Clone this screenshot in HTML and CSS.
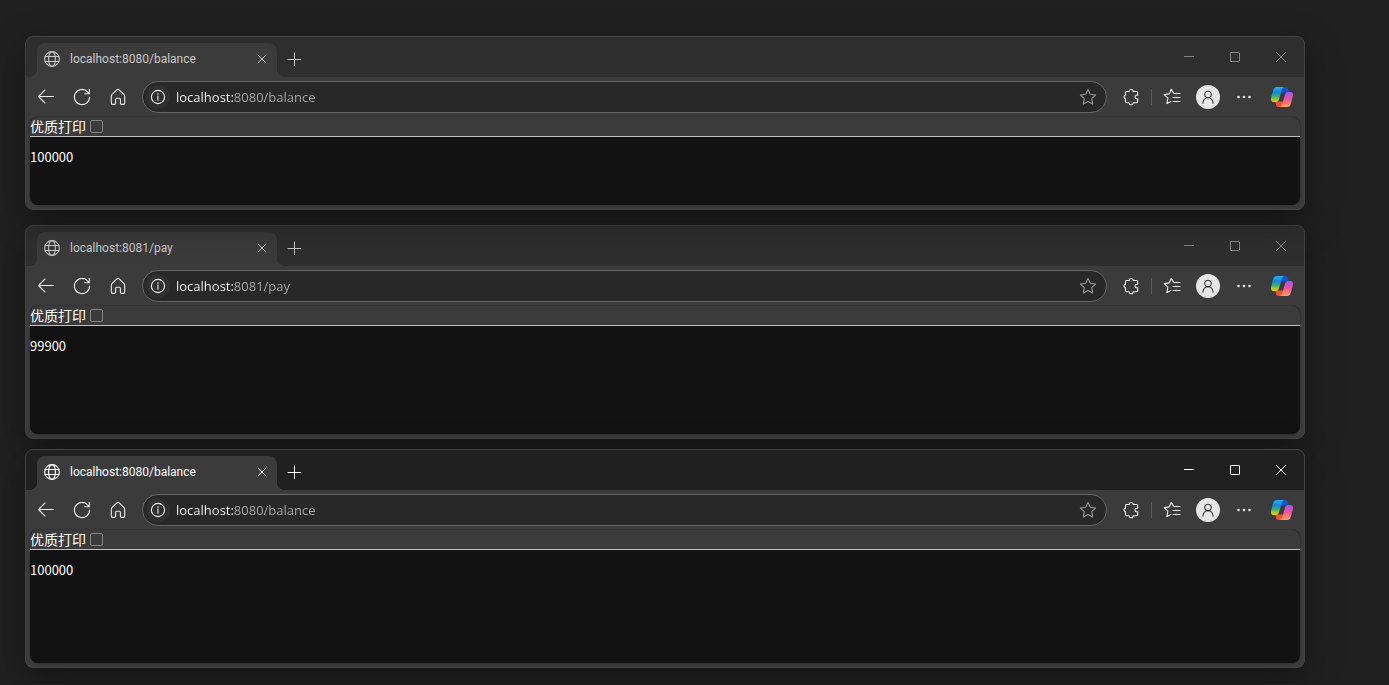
FILE: index.html
```
<!DOCTYPE html>
<html lang="zh-CN">
  <head>
    <meta charset="UTF-8" />
    <meta name="viewport" content="width=device-width, initial-scale=1.0" />
    <title>localhost</title>
    <link rel="stylesheet" href="styles.css">
  </head>
  <body>
    <!-- Shared icons -->
    <svg class="sprite" aria-hidden="true">
      <defs>
        <linearGradient id="cool" x1="0" y1="0" x2="0" y2="1">
          <stop offset="0" stop-color="#22b4f5" />
          <stop offset="0.35" stop-color="#1487dc" />
          <stop offset="0.65" stop-color="#45b070" />
          <stop offset="1" stop-color="#f5d400" />
        </linearGradient>
        <linearGradient id="warm" x1="0" y1="1" x2="0" y2="0">
          <stop offset="0" stop-color="#a354f0" />
          <stop offset="0.5" stop-color="#f0569a" />
          <stop offset="1" stop-color="#ffa65c" />
        </linearGradient>
      </defs>
      <symbol id="globe" viewBox="0 0 16 16">
        <circle cx="8" cy="8" r="7.4" />
        <ellipse cx="8" cy="8" rx="3.4" ry="7.4" />
        <path d="M1.2 5.5h13.6M1.2 10.5h13.6" />
      </symbol>
      <symbol id="close" viewBox="0 0 10 10">
        <path d="M1 1l8 8M9 1l-8 8" />
      </symbol>
      <symbol id="plus" viewBox="0 0 14 14">
        <path d="M7.5 1v13M1 7.5h13" />
      </symbol>
      <symbol id="minimize" viewBox="0 0 10 10">
        <path d="M0 4.5h10" />
      </symbol>
      <symbol id="maximize" viewBox="0 0 10 10">
        <rect x="0.5" y="0.5" width="9" height="9" rx="0.5" />
      </symbol>
      <symbol id="win-close" viewBox="0 0 10 10">
        <path d="M0 0l10 10M10 0l-10 10" />
      </symbol>
      <symbol id="back" viewBox="0 0 18 18">
        <path d="M16.500 8.500H1.500M8 2L1.500 8.500l6.500 6.500" />
      </symbol>
      <symbol id="reload" viewBox="0 0 18 18">
        <path d="M16.6 9A7.6 7.6 0 1 1 14.7 4L16.2 5.7M16.3 1.2v4.6h-4.6" />
      </symbol>
      <symbol id="home" viewBox="0 0 18 18">
        <path d="M2.3 8.1c0-.8.3-1.3.8-1.8l4.8-4.4c.7-.6 1.5-.6 2.2 0l4.8 4.4c.5.5.8 1 .8 1.8v7c0 .8-.5 1.3-1.3 1.3h-1.8c-.7 0-1.2-.5-1.2-1.2v-3.7c0-.8-.4-1.2-1.2-1.2H7.8c-.8 0-1.2.4-1.2 1.2v3.7c0 .7-.5 1.2-1.2 1.2H3.6c-.8 0-1.3-.5-1.3-1.3z" />
      </symbol>
      <symbol id="info" viewBox="0 0 16 16">
        <circle cx="8" cy="8" r="6.6" />
        <path d="M8 7v4.2" />
        <circle class="solid" cx="8" cy="5" r="0.8" />
      </symbol>
      <symbol id="star" viewBox="0 0 18 18">
        <path d="M9 1.4l2.3 4.9 5.3.7-3.9 3.7 1 5.4L9 13.5l-4.7 2.6 1-5.4L1.4 7l5.3-.7z" />
      </symbol>
      <symbol id="puzzle" viewBox="0 0 18 18">
        <path d="M4.500 3.500h2.700a2 2 0 0 1 4 0h3.300c.7 0 1.200.5 1.200 1.200v2.500h-.8a1.800 1.800 0 0 0 0 3.700h.8v2.600c0 .7-.5 1.200-1.200 1.200h-3.300a2 2 0 0 1-4 0H4.700c-.7 0-1.200-.5-1.200-1.200v-2.700a1.900 1.900 0 0 1 0-3.700V4.700c0-.7.4-1.200 1-1.200z" />
      </symbol>
      <symbol id="favorites" viewBox="0 0 18 18">
        <path d="M11.6 5.5h-.8L8.3 1.3 6.2 5.9l-5 .7 3.7 3.6-1 5.4 4-2.2M11 5.5h6M10 9.5h7M10 13.5h7" />
      </symbol>
      <symbol id="person" viewBox="0 0 24 24">
        <circle cx="12" cy="9.5" r="3.2" />
        <path d="M6.9 18.2c.3-3.3 2.2-5.5 5.1-5.5s4.8 2.2 5.1 5.5" />
      </symbol>
      <symbol id="dots" viewBox="0 0 18 18">
        <circle class="solid" cx="3.5" cy="9" r="1.3" />
        <circle class="solid" cx="9" cy="9" r="1.3" />
        <circle class="solid" cx="14.5" cy="9" r="1.3" />
      </symbol>
      <symbol id="copilot" viewBox="0 0 24 24">
        <path fill="#1a4fd0" d="M12 2h3.300c1.800 0 2.400 1.200 2.900 3l.8 2.400h-8z" />
        <path fill="#f4522f" d="M12 22H8.700c-1.800 0-2.400-1.200-2.900-3L5 16.600h8z" />
        <path fill="url(#cool)" d="M6.800 2h8c-2 0-2.700 1.600-3.200 3.400L9.100 14c-.6 2-1.300 3-3.400 3H4c-3 0-3.400-2.100-2.700-5l1.900-6.800C3.800 3 4.900 2 6.800 2z" />
        <path fill="url(#warm)" transform="rotate(180 12 12)" d="M6.800 2h8c-2 0-2.700 1.600-3.200 3.400L9.100 14c-.6 2-1.300 3-3.400 3H4c-3 0-3.400-2.100-2.700-5l1.900-6.800C3.800 3 4.900 2 6.800 2z" />
      </symbol>
    </svg>

    <main class="desktop">
      <section class="window front">
        <header class="tab-strip">
          <div class="tab">
            <svg class="icon-16"><use href="#globe" /></svg>
            <span class="tab-title">localhost:8080/balance</span>
            <button class="tab-close" aria-label="Close tab"><svg class="icon-10"><use href="#close" /></svg></button>
          </div>
          <button class="new-tab" aria-label="New tab"><svg class="icon-14"><use href="#plus" /></svg></button>
          <div class="window-controls">
            <button aria-label="Minimize"><svg class="icon-10"><use href="#minimize" /></svg></button>
            <button aria-label="Maximize"><svg class="icon-10"><use href="#maximize" /></svg></button>
            <button aria-label="Close"><svg class="icon-10"><use href="#win-close" /></svg></button>
          </div>
        </header>
        <nav class="toolbar">
          <button aria-label="Back"><svg class="icon-18"><use href="#back" /></svg></button>
          <button aria-label="Reload"><svg class="icon-18"><use href="#reload" /></svg></button>
          <button aria-label="Home"><svg class="icon-18"><use href="#home" /></svg></button>
          <div class="address-bar">
            <button class="site-info" aria-label="Site information"><svg class="icon-16"><use href="#info" /></svg></button>
            <input type="text" class="address" aria-label="Address" value="localhost:8080/balance" />
            <button class="bookmark" aria-label="Add to favorites"><svg class="icon-18"><use href="#star" /></svg></button>
          </div>
          <button aria-label="Extensions"><svg class="icon-18"><use href="#puzzle" /></svg></button>
          <span class="separator"></span>
          <button aria-label="Favorites"><svg class="icon-18"><use href="#favorites" /></svg></button>
          <button aria-label="Profile"><svg class="avatar"><use href="#person" /></svg></button>
          <button aria-label="More"><svg class="icon-18"><use href="#dots" /></svg></button>
          <button class="copilot" aria-label="Copilot"><svg><use href="#copilot" /></svg></button>
        </nav>
        <div class="page">
          <div class="print-bar">
            <label for="print1">优质打印</label>
            <input type="checkbox" id="print1" />
          </div>
          <pre class="result result-short">100000</pre>
        </div>
      </section>

      <section class="window">
        <header class="tab-strip">
          <div class="tab">
            <svg class="icon-16"><use href="#globe" /></svg>
            <span class="tab-title">localhost:8081/pay</span>
            <button class="tab-close" aria-label="Close tab"><svg class="icon-10"><use href="#close" /></svg></button>
          </div>
          <button class="new-tab" aria-label="New tab"><svg class="icon-14"><use href="#plus" /></svg></button>
          <div class="window-controls">
            <button aria-label="Minimize"><svg class="icon-10"><use href="#minimize" /></svg></button>
            <button aria-label="Maximize"><svg class="icon-10"><use href="#maximize" /></svg></button>
            <button aria-label="Close"><svg class="icon-10"><use href="#win-close" /></svg></button>
          </div>
        </header>
        <nav class="toolbar">
          <button aria-label="Back"><svg class="icon-18"><use href="#back" /></svg></button>
          <button aria-label="Reload"><svg class="icon-18"><use href="#reload" /></svg></button>
          <button aria-label="Home"><svg class="icon-18"><use href="#home" /></svg></button>
          <div class="address-bar">
            <button class="site-info" aria-label="Site information"><svg class="icon-16"><use href="#info" /></svg></button>
            <input type="text" class="address" aria-label="Address" value="localhost:8081/pay" />
            <button class="bookmark" aria-label="Add to favorites"><svg class="icon-18"><use href="#star" /></svg></button>
          </div>
          <button aria-label="Extensions"><svg class="icon-18"><use href="#puzzle" /></svg></button>
          <span class="separator"></span>
          <button aria-label="Favorites"><svg class="icon-18"><use href="#favorites" /></svg></button>
          <button aria-label="Profile"><svg class="avatar"><use href="#person" /></svg></button>
          <button aria-label="More"><svg class="icon-18"><use href="#dots" /></svg></button>
          <button class="copilot" aria-label="Copilot"><svg><use href="#copilot" /></svg></button>
        </nav>
        <div class="page">
          <div class="print-bar">
            <label for="print2">优质打印</label>
            <input type="checkbox" id="print2" />
          </div>
          <pre class="result">99900</pre>
        </div>
      </section>

      <section class="window active">
        <header class="tab-strip">
          <div class="tab">
            <svg class="icon-16"><use href="#globe" /></svg>
            <span class="tab-title">localhost:8080/balance</span>
            <button class="tab-close" aria-label="Close tab"><svg class="icon-10"><use href="#close" /></svg></button>
          </div>
          <button class="new-tab" aria-label="New tab"><svg class="icon-14"><use href="#plus" /></svg></button>
          <div class="window-controls">
            <button aria-label="Minimize"><svg class="icon-10"><use href="#minimize" /></svg></button>
            <button aria-label="Maximize"><svg class="icon-10"><use href="#maximize" /></svg></button>
            <button aria-label="Close"><svg class="icon-10"><use href="#win-close" /></svg></button>
          </div>
        </header>
        <nav class="toolbar">
          <button aria-label="Back"><svg class="icon-18"><use href="#back" /></svg></button>
          <button aria-label="Reload"><svg class="icon-18"><use href="#reload" /></svg></button>
          <button aria-label="Home"><svg class="icon-18"><use href="#home" /></svg></button>
          <div class="address-bar">
            <button class="site-info" aria-label="Site information"><svg class="icon-16"><use href="#info" /></svg></button>
            <input type="text" class="address" aria-label="Address" value="localhost:8080/balance" />
            <button class="bookmark" aria-label="Add to favorites"><svg class="icon-18"><use href="#star" /></svg></button>
          </div>
          <button aria-label="Extensions"><svg class="icon-18"><use href="#puzzle" /></svg></button>
          <span class="separator"></span>
          <button aria-label="Favorites"><svg class="icon-18"><use href="#favorites" /></svg></button>
          <button aria-label="Profile"><svg class="avatar"><use href="#person" /></svg></button>
          <button aria-label="More"><svg class="icon-18"><use href="#dots" /></svg></button>
          <button class="copilot" aria-label="Copilot"><svg><use href="#copilot" /></svg></button>
        </nav>
        <div class="page">
          <div class="print-bar">
            <label for="print3">优质打印</label>
            <input type="checkbox" id="print3" />
          </div>
          <pre class="result result-tall">100000</pre>
        </div>
      </section>
    </main>
  </body>
</html>
```
FILE: styles.css
```
* {
  box-sizing: border-box;
}

body {
  margin: 0;
  background-color: #202020;
  color: #fff;
  font-family: "Open Sans", "Noto Sans CJK SC", sans-serif;
  font-size: 12px;
}

button {
  display: flex;
  align-items: center;
  justify-content: center;
  flex-shrink: 0;
  padding: 0;
  border: 0;
  background: none;
  color: inherit;
}

svg {
  display: block;
  flex-shrink: 0;
  fill: none;
  stroke: currentColor;
  stroke-width: 1.1;
  stroke-linecap: round;
  stroke-linejoin: round;
}

.sprite {
  position: absolute;
  width: 0;
  height: 0;
}

.solid {
  fill: currentColor;
  stroke: none;
}

.icon-10 {
  width: 10px;
  height: 10px;
  stroke-width: 1;
  overflow: visible;
}

.icon-14 {
  width: 14px;
  height: 14px;
  stroke-width: 1;
}

.icon-16 {
  width: 16px;
  height: 16px;
}

.icon-18 {
  width: 18px;
  height: 18px;
}

.desktop {
  display: flex;
  flex-direction: column;
  padding: 36px 84px 16px 25px;
}

.window {
  position: relative;
  margin-bottom: 10px;
  border: 1px solid #434343;
  border-radius: 8px;
  background-color: #3b3b3b;
  box-shadow: 0 12px 36px rgba(0, 0, 0, 0.35);
}

/* Its shadow falls on the window below */
.window.front {
  z-index: 1;
  margin-bottom: 15px;
}

.window.active {
  z-index: 2;
  margin-bottom: 0;
}

/* Tabs */
.tab-strip {
  display: flex;
  align-items: flex-end;
  height: 40px;
  padding-left: 11px;
  border-radius: 7px 7px 0 0;
  background-color: #2e2e2e;
  color: #c8c8c8;
}

.active .tab-strip {
  background-color: #202020;
  color: #fff;
}

.tab {
  position: relative;
  display: flex;
  align-items: center;
  width: 240px;
  height: 34px;
  padding: 0 6px 2px 7px;
  border-radius: 8px 8px 0 0;
  background-color: #3b3b3b;
}

/* Curved feet of the tab */
.tab::before,
.tab::after {
  content: "";
  position: absolute;
  bottom: 0;
  width: 8px;
  height: 8px;
}

.tab::before {
  right: 100%;
  background: radial-gradient(circle at 0 0, transparent 8px, #3b3b3b 8px);
}

.tab::after {
  left: 100%;
  background: radial-gradient(circle at 100% 0, transparent 8px, #3b3b3b 8px);
}

.tab-title {
  flex: 1;
  margin-left: 10px;
  font-family: Roboto, sans-serif;
  line-height: 16px;
  white-space: nowrap;
}

.tab-close {
  width: 18px;
  height: 18px;
}

.new-tab {
  width: 34px;
  height: 36px;
}

.window-controls {
  display: flex;
  align-self: stretch;
  margin-left: auto;
  color: #858585;
}

.window-controls button {
  width: 46px;
  height: 40px;
}

.active .window-controls {
  color: #fff;
}

/* Toolbar */
.toolbar {
  display: flex;
  align-items: center;
  height: 40px;
  padding: 0 4px 0 2px;
  color: #eee;
}

.toolbar > button {
  width: 36px;
  height: 32px;
}

.address-bar {
  display: flex;
  align-items: center;
  flex: 1;
  min-width: 0;
  height: 32px;
  margin: 0 6px;
  padding: 0 6px 0 3px;
  border: 1px solid #666;
  border-radius: 16px;
  background-color: #282828;
}

.site-info {
  width: 24px;
  height: 24px;
  border-radius: 12px;
  background-color: #303030;
}

/* Host in white, port and path in grey */
.address {
  flex: 1;
  min-width: 0;
  height: 24px;
  margin-left: 6px;
  padding: 0;
  border: 0;
  outline: 0;
  background: linear-gradient(90deg, #fff 58px, #ababab 58px);
  -webkit-background-clip: text;
  background-clip: text;
  color: transparent;
  font-family: inherit;
  font-size: 13px;
}

.bookmark {
  width: 24px;
  height: 24px;
  color: #999;
}

.separator {
  width: 1px;
  height: 16px;
  margin: 0 2px;
  background-color: #5a5a5a;
}

.avatar {
  width: 24px;
  height: 24px;
  border-radius: 12px;
  background-color: #e6e6e6;
  color: #333;
}

.copilot {
  margin-left: 2px;
}

.copilot svg {
  width: 24px;
  height: 24px;
  stroke: none;
}

/* Page */
.page {
  margin: 0 4px 4px;
  border-radius: 8px;
  background-color: #121212;
  box-shadow: 0 0 2px rgba(0, 0, 0, 0.4);
  overflow: hidden;
}

.print-bar {
  display: flex;
  align-items: center;
  height: 20px;
  border-bottom: 1px solid #c0c0c0;
  background-color: #3b3b3b;
  font-family: "Noto Sans CJK SC", sans-serif;
  font-size: 14px;
  line-height: 18px;
}

.print-bar label {
  padding-bottom: 2px;
}

.print-bar input {
  appearance: none;
  width: 13px;
  height: 13px;
  margin: 0 4px;
  border: 1px solid #858585;
  border-radius: 2px;
  background-color: #3b3b3b;
}

.result {
  min-height: 108px;
  margin: 0;
  padding-top: 11px;
  font-family: "Noto Sans CJK SC", sans-serif;
  font-size: 13px;
  line-height: 18px;
}

.result-short {
  min-height: 68px;
}

.result-tall {
  min-height: 113px;
}
```
